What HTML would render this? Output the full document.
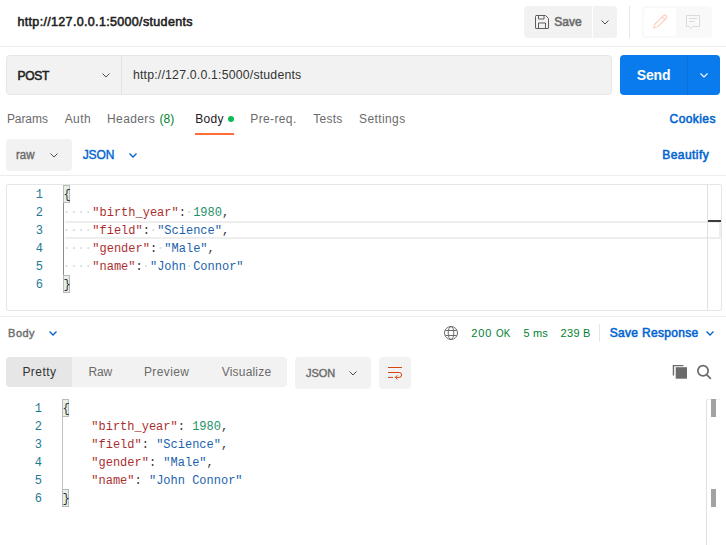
<!DOCTYPE html>
<html><head><meta charset="utf-8">
<style>
*{box-sizing:border-box;margin:0;padding:0}
html,body{width:726px;height:545px;overflow:hidden;background:#fff}
body{font-family:"Liberation Sans",sans-serif;position:relative;color:#212121}
.abs{position:absolute;white-space:nowrap}
svg{position:absolute;left:0;top:0;overflow:visible}
.mono{font-family:"Liberation Mono",monospace;font-size:12px;line-height:18px;white-space:pre}
.ln{color:#237893;text-align:right;width:30px}
.k{color:#a31515}.s{color:#0451a5}.n{color:#098658}.p{color:#1a1a1a}
.ws{color:#cfd3dc;position:relative;left:-0.5px}
.bm{position:absolute;width:7px;height:18px;background:#e6f0e6;border:1px solid #b9b9b9}
</style></head><body>

<!-- save group -->
<div class="abs" style="left:524px;top:6px;width:68px;height:32px;background:#f2f2f2;border-radius:4px 0 0 4px"></div>
<div class="abs" style="left:593px;top:6px;width:24px;height:32px;background:#f2f2f2;border-radius:0 4px 4px 0"></div>
<div class="abs" style="left:629px;top:6px;width:1px;height:32px;background:#e6e6e6"></div>
<div class="abs" style="left:642px;top:6px;width:70px;height:32px;background:#f9f9f9;border-radius:4px"></div>
<div class="abs" style="left:644px;top:8px;width:32px;height:28px;background:#fff;border-radius:3px"></div>

<div class="abs" style="left:0;top:46px;width:726px;height:1px;background:#ededed"></div>

<!-- URL bar -->
<div class="abs" style="left:6px;top:55px;width:606px;height:40px;background:#f2f2f2;border:1px solid #e6e6e6;border-radius:4px"></div>
<div class="abs" style="left:121px;top:56px;width:1px;height:38px;background:#e2e2e2"></div>

<!-- Send -->
<div class="abs" style="left:620px;top:55px;width:100px;height:40px;background:#097bed;border-radius:4px"></div>
<div class="abs" style="left:687px;top:55px;width:1px;height:40px;background:#0a70d6"></div>

<!-- tabs -->
<div class="abs" style="left:228px;top:116px;width:6.400px;height:6.400px;border-radius:50%;background:#0cbb52"></div>
<div class="abs" style="left:195px;top:133px;width:39px;height:2px;background:#ff6c37"></div>

<!-- raw -->
<div class="abs" style="left:6px;top:139px;width:66px;height:32px;background:#f2f2f2;border-radius:4px"></div>
<div class="abs" style="left:0;top:175px;width:726px;height:1px;background:#ededed"></div>

<!-- editor -->
<div class="abs" style="left:6px;top:184px;width:716px;height:127px;border:1px solid #e6e6e6;border-radius:2px"></div>
<div class="abs" style="left:65px;top:221px;width:656px;height:18px;border:2px solid #eeeeee;border-left:0"></div>
<div class="abs" style="left:707px;top:185px;width:1px;height:125px;background:#e0e0e0"></div>
<div class="abs" style="left:708px;top:220px;width:13px;height:2px;background:#3a3a3a"></div>
<div class="abs" style="left:63px;top:203px;width:1px;height:72px;background:#8c8c8c"></div>
<div class="bm" style="left:63px;top:185px"></div>
<div class="bm" style="left:63px;top:275px"></div>
<div class="abs mono ln" style="left:13px;top:186px">1
2
3
4
5
6</div>
<div class="abs mono" style="left:63.500px;top:186px;opacity:.9"><span class="p">{</span>
<span class="ws">····</span><span class="k">"birth_year"</span><span class="p">:</span><span class="ws">·</span><span class="n">1980</span><span class="p">,</span>
<span class="ws">····</span><span class="k">"field"</span><span class="p">:</span><span class="ws">·</span><span class="s">"Science"</span><span class="p">,</span>
<span class="ws">····</span><span class="k">"gender"</span><span class="p">:</span><span class="ws">·</span><span class="s">"Male"</span><span class="p">,</span>
<span class="ws">····</span><span class="k">"name"</span><span class="p">:</span><span class="ws">·</span><span class="s">"John<span class="ws">·</span>Connor"</span>
<span class="p">}</span></div>

<div class="abs" style="left:0;top:316px;width:726px;height:1px;background:#ededed"></div>
<div class="abs" style="left:599px;top:324px;width:1px;height:18px;background:#e6e6e6"></div>

<!-- response tabs -->
<div class="abs" style="left:6px;top:357px;width:281px;height:30px;background:#f2f2f2;border-radius:4px"></div>
<div class="abs" style="left:6px;top:357px;width:66px;height:30px;background:#e6e6e6;border-radius:4px 0 0 4px"></div>
<div class="abs" style="left:295px;top:357px;width:76px;height:32px;background:#f2f2f2;border-radius:4px"></div>
<div class="abs" style="left:379px;top:357px;width:32px;height:32px;background:#f2f2f2;border-radius:4px"></div>

<!-- response body -->
<div class="abs" style="left:62px;top:417px;width:1px;height:72px;background:#c2c2c2"></div>
<div class="bm" style="left:62px;top:399px"></div>
<div class="bm" style="left:62px;top:489px"></div>
<div class="abs mono ln" style="left:12px;top:400px">1
2
3
4
5
6</div>
<div class="abs mono" style="left:62.500px;top:400px;opacity:.9"><span class="p">{</span>
    <span class="k">"birth_year"</span><span class="p">: </span><span class="n">1980</span><span class="p">,</span>
    <span class="k">"field"</span><span class="p">: </span><span class="s">"Science"</span><span class="p">,</span>
    <span class="k">"gender"</span><span class="p">: </span><span class="s">"Male"</span><span class="p">,</span>
    <span class="k">"name"</span><span class="p">: </span><span class="s">"John Connor"</span>
<span class="p">}</span></div>
<div class="abs" style="left:706px;top:399px;width:1px;height:146px;background:#e0e0e0"></div>
<div class="abs" style="left:706px;top:399px;width:14px;height:1px;background:#f0f0f0"></div>
<div class="abs" style="left:711px;top:399px;width:5px;height:18px;background:#a3a3a3"></div>
<div class="abs" style="left:711px;top:489px;width:5px;height:18px;background:#a3a3a3"></div>

<!-- icons: one full-page svg in absolute page coords -->
<svg width="726" height="545" viewBox="0 0 726 545" fill="none">
  <!-- save icon -->
  <g stroke="#5e5e5e" stroke-width="1" stroke-linejoin="round">
    <path d="M536 15.500h9.500l3 3v9.500a.5.500 0 0 1-.5.500h-12a.5.500 0 0 1-.5-.500v-11.500a.5.500 0 0 1 .5-.500z"/>
    <path d="M538.500 15.500v3.500h5.500v-3.500"/>
    <path d="M538.500 28.500v-5.500h7v5.500"/>
  </g>
  <!-- chevrons -->
  <g stroke="#4f4f4f" stroke-width="1">
    <path d="M601.5 20.5l3.500 3.500 3.500-3.500"/>
    <path d="M102.5 73.5l3.500 3.500 3.500-3.500"/>
    <path d="M50.5 153.5l3.500 3.500 3.500-3.500"/>
    <path d="M349.5 371.5l3.500 3.500 3.500-3.500"/>
  </g>
  <g stroke="#0260cc" stroke-width="1.250">
    <path d="M129.5 153.5l3.500 3.500 3.500-3.500"/>
    <path d="M49.5 331.5l3.500 3.500 3.500-3.500"/>
    <path d="M706.5 331.5l3.500 3.500 3.500-3.500"/>
  </g>
  <g stroke="#fff" stroke-width="1.100"><path d="M700.5 73.5l3.500 3.500 3.500-3.500"/></g>
  <!-- pencil -->
  <g transform="translate(659.900 21.900) rotate(45)" stroke="#ffc9b6" stroke-width="1" stroke-linejoin="round">
    <path d="M-1.900 -7v11.800l1.900 4 1.900-4v-11.800a1.900 1.900 0 0 0-3.800 0z"/>
    <path d="M-1.900 -5.200h3.800"/>
  </g>
  <!-- comment -->
  <g stroke="#dbdbdb" stroke-width="1" stroke-linejoin="round">
    <path d="M686.500 15.500h13v11h-6.600l-1.900 2-1.900-2h-2.600z"/>
    <path d="M689 18.500h8M689 21.500h6"/>
  </g>
  <!-- globe -->
  <g stroke="#6b6b6b" stroke-width="1">
    <circle cx="451" cy="333" r="6.500"/>
    <ellipse cx="451" cy="333" rx="2.800" ry="6.500"/>
    <path d="M445.300 330.500h11.400M445.300 335.500h11.400"/>
  </g>
  <!-- wrap -->
  <g stroke="#d4460f" stroke-width="1" stroke-linejoin="round">
    <path d="M388 367.500h14"/>
    <path d="M388 372.500h11.200a2.450 2.450 0 0 1 0 4.900h-3.800"/>
    <path d="M397.400 375.300l-2.100 2.100 2.100 2.100"/>
    <path d="M388 377.400h5"/>
  </g>
  <!-- copy -->
  <path d="M673.450 375.600V365.650H683.400" stroke="#6b6b6b" stroke-width="1.400"/>
  <rect x="675.700" y="367.200" width="11.300" height="11.500" fill="#6b6b6b"/>
  <!-- search -->
  <circle cx="703" cy="370.800" r="5.150" stroke="#6b6b6b" stroke-width="1.700"/>
  <path d="M706.800 374.800l3.600 3.600" stroke="#6b6b6b" stroke-width="1.700" stroke-linecap="round"/>
</svg>

<div class="abs" style="left:17.46px;top:14px;font-weight:normal;-webkit-text-stroke:0.55px #212121;font-size:12.5px;color:#212121;letter-spacing:0.333px;line-height:16px;">http://127.0.0.1:5000/students</div>
<div class="abs" style="left:554.25px;top:14px;font-weight:normal;-webkit-text-stroke:0.55px #6b6b6b;font-size:12px;color:#6b6b6b;letter-spacing:0.033px;line-height:16px;">Save</div>
<div class="abs" style="left:17.59px;top:68px;font-weight:normal;-webkit-text-stroke:0.55px #212121;font-size:12px;color:#212121;letter-spacing:-0.343px;line-height:16px;">POST</div>
<div class="abs" style="left:132.99px;top:67px;font-weight:normal;font-size:12.3px;color:#333;letter-spacing:0.190px;line-height:16px;">http://127.0.0.1:5000/students</div>
<div class="abs" style="left:636.72px;top:67px;font-weight:bold;font-size:14px;color:#fff;letter-spacing:-0.157px;line-height:16px;">Send</div>
<div class="abs" style="left:6.89px;top:111px;font-weight:normal;font-size:12px;color:#6b6b6b;letter-spacing:-0.058px;line-height:16px;">Params</div>
<div class="abs" style="left:64.65px;top:111px;font-weight:normal;font-size:12px;color:#6b6b6b;letter-spacing:0.427px;line-height:16px;">Auth</div>
<div class="abs" style="left:107.09px;top:111px;font-weight:normal;font-size:12px;color:#6b6b6b;letter-spacing:0.368px;line-height:16px;">Headers</div>
<div class="abs" style="left:159.54px;top:111px;font-weight:normal;font-size:12px;color:#007f31;letter-spacing:0.025px;line-height:16px;">(8)</div>
<div class="abs" style="left:195.19px;top:111px;font-weight:normal;font-size:12px;color:#212121;letter-spacing:0.280px;line-height:16px;">Body</div>
<div class="abs" style="left:250.29px;top:111px;font-weight:normal;font-size:12px;color:#6b6b6b;letter-spacing:0.373px;line-height:16px;">Pre-req.</div>
<div class="abs" style="left:313.24px;top:111px;font-weight:normal;font-size:12px;color:#6b6b6b;letter-spacing:0.250px;line-height:16px;">Tests</div>
<div class="abs" style="left:359.00px;top:111px;font-weight:normal;font-size:12px;color:#6b6b6b;letter-spacing:0.400px;line-height:16px;">Settings</div>
<div class="abs" style="left:669.59px;top:111px;font-weight:normal;-webkit-text-stroke:0.55px #0265d2;font-size:12px;color:#0265d2;letter-spacing:0.423px;line-height:16px;">Cookies</div>
<div class="abs" style="left:16.03px;top:147px;font-weight:normal;-webkit-text-stroke:0.4px #6b6b6b;font-size:12px;color:#6b6b6b;letter-spacing:0.000px;line-height:16px;transform:scaleX(0.9536);transform-origin:0 0">raw</div>
<div class="abs" style="left:82.69px;top:147px;font-weight:normal;-webkit-text-stroke:0.4px #0265d2;font-size:12px;color:#0265d2;letter-spacing:-0.123px;line-height:16px;">JSON</div>
<div class="abs" style="left:662.29px;top:147px;font-weight:normal;-webkit-text-stroke:0.55px #0265d2;font-size:12px;color:#0265d2;letter-spacing:0.429px;line-height:16px;">Beautify</div>
<div class="abs" style="left:8.12px;top:325px;font-weight:normal;-webkit-text-stroke:0.4px #6b6b6b;font-size:11px;color:#6b6b6b;letter-spacing:0.460px;line-height:16px;">Body</div>
<div class="abs" style="left:471.30px;top:325px;font-weight:normal;font-size:11px;color:#007f31;letter-spacing:0.820px;line-height:16px;">200</div>
<div class="abs" style="left:495.73px;top:325px;font-weight:normal;font-size:11px;color:#007f31;letter-spacing:0.000px;line-height:16px;transform:scaleX(0.8915);transform-origin:0 0">OK</div>
<div class="abs" style="left:523.40px;top:325px;font-weight:normal;font-size:11px;color:#007f31;letter-spacing:0.207px;line-height:16px;">5 ms</div>
<div class="abs" style="left:560.60px;top:325px;font-weight:normal;font-size:11px;color:#007f31;letter-spacing:0.280px;line-height:16px;">239 B</div>
<div class="abs" style="left:609.75px;top:325px;font-weight:normal;-webkit-text-stroke:0.55px #0265d2;font-size:12px;color:#0265d2;letter-spacing:0.310px;line-height:16px;">Save Response</div>
<div class="abs" style="left:22.39px;top:364px;font-weight:normal;font-size:12px;color:#333;letter-spacing:0.448px;line-height:16px;">Pretty</div>
<div class="abs" style="left:88.59px;top:364px;font-weight:normal;font-size:12px;color:#6b6b6b;letter-spacing:-0.265px;line-height:16px;">Raw</div>
<div class="abs" style="left:143.99px;top:364px;font-weight:normal;font-size:12px;color:#6b6b6b;letter-spacing:0.385px;line-height:16px;">Preview</div>
<div class="abs" style="left:221.75px;top:364px;font-weight:normal;font-size:12px;color:#6b6b6b;letter-spacing:0.188px;line-height:16px;">Visualize</div>
<div class="abs" style="left:306.05px;top:365px;font-weight:normal;-webkit-text-stroke:0.4px #6b6b6b;font-size:11px;color:#6b6b6b;letter-spacing:-0.023px;line-height:16px;">JSON</div>
</body></html>
